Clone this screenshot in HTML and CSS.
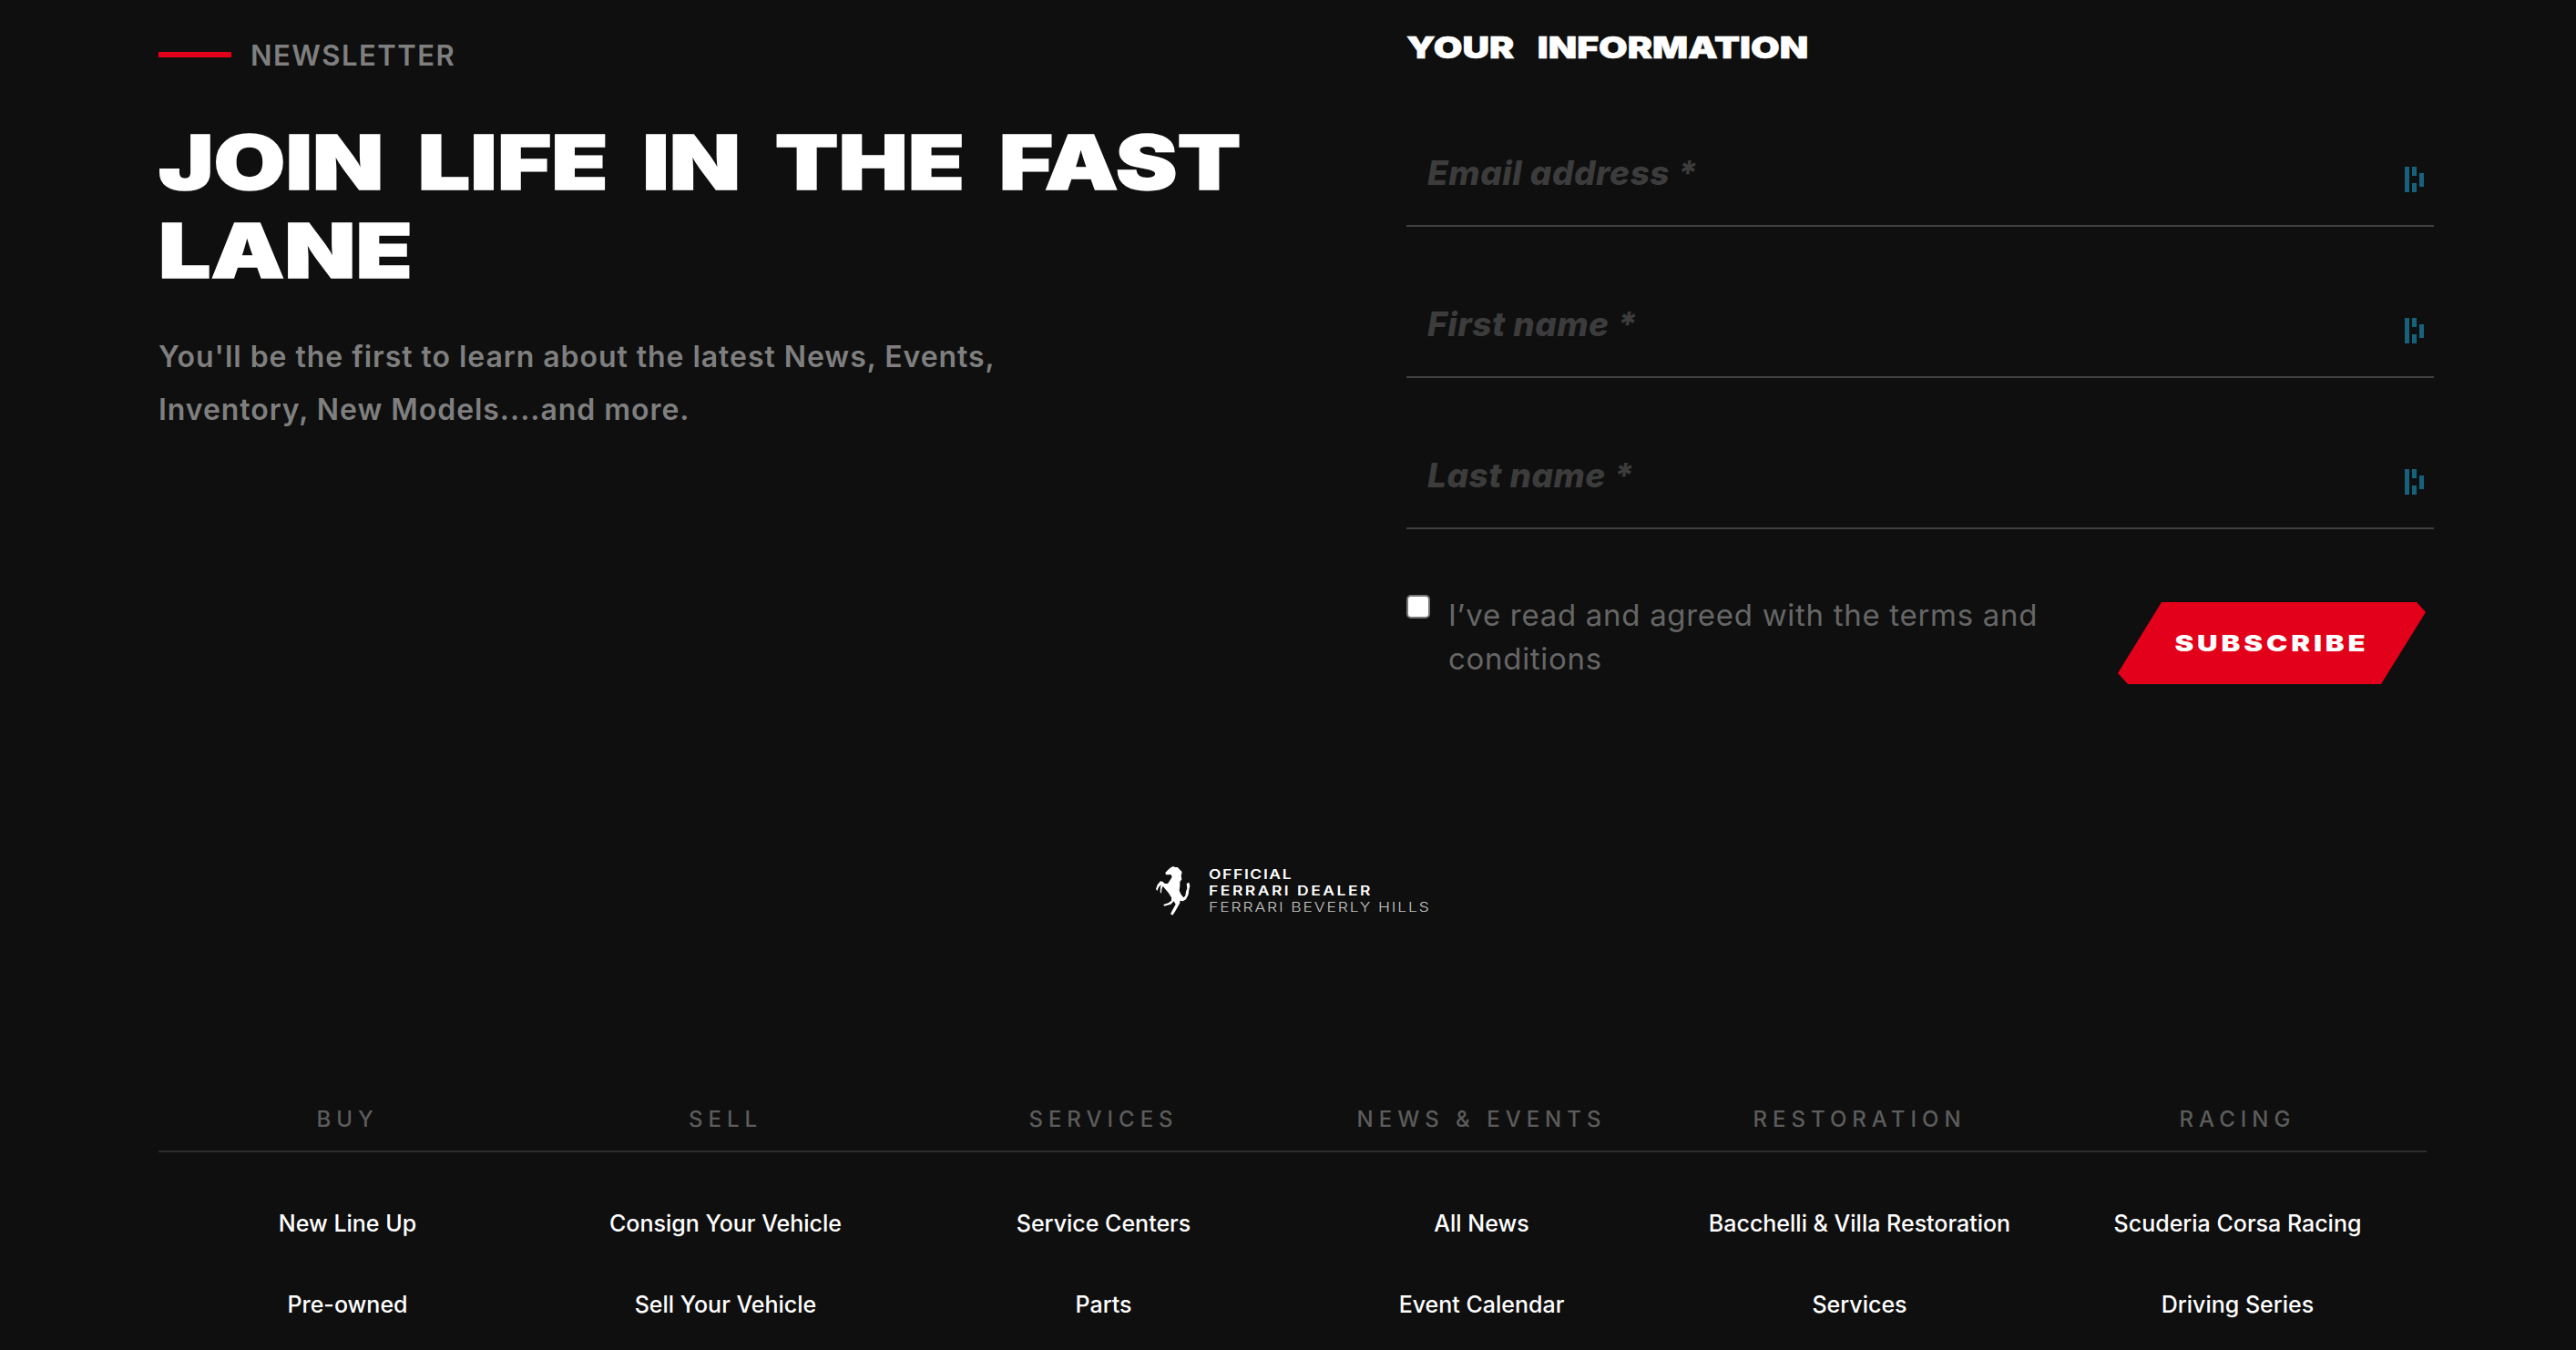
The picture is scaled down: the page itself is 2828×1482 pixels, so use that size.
FILE: index.html
```html
<!DOCTYPE html>
<html lang="en">
<head>
    <meta charset="UTF-8">
    <title>Newsletter - Ferrari Beverly Hills</title>
    <link rel="stylesheet" href="styles.css">
</head>
<body>
    <section class="newsletter">
        <div class="intro">
            <div class="eyebrow"><span class="eyebrow-line"></span>NEWSLETTER</div>
            <h1 class="title"><span class="title-line">JOIN LIFE IN THE FAST</span><span class="title-line">LANE</span></h1>
            <p class="lead">You'll be the first to learn about the latest News, Events, Inventory, New Models....and more.</p>
        </div>
        <form class="signup">
            <h2 class="signup-title"><span class="signup-title-text">YOUR INFORMATION</span></h2>
            <label class="field">
                <input type="text" placeholder="Email address *">
                <svg class="field-icon" viewBox="0 0 21 28"><path d="M0 0h5v28H0zM8 0h5v10H8zM8 18h5v10H8zM16 7h5v15h-5z"/></svg>
            </label>
            <label class="field">
                <input type="text" placeholder="First name *">
                <svg class="field-icon" viewBox="0 0 21 28"><path d="M0 0h5v28H0zM8 0h5v10H8zM8 18h5v10H8zM16 7h5v15h-5z"/></svg>
            </label>
            <label class="field">
                <input type="text" placeholder="Last name *">
                <svg class="field-icon" viewBox="0 0 21 28"><path d="M0 0h5v28H0zM8 0h5v10H8zM8 18h5v10H8zM16 7h5v15h-5z"/></svg>
            </label>
            <div class="signup-bottom">
                <label class="terms">
                    <input type="checkbox" class="terms-box">
                    <span class="terms-text">I’ve read and agreed with the terms and conditions</span>
                </label>
                <button type="button" class="subscribe"><span class="subscribe-text">SUBSCRIBE</span></button>
            </div>
        </form>
    </section>

    <div class="dealer">
        <svg class="dealer-horse" viewBox="0 0 156 192"><path fill="#fff" d="M52 36L60 28 68 20 78 15 84 18 92 18 100 26 107 34 104 46 106 58 100 66 100 80 98 95 104 108 112 118 118 112 120 98 124 88 122 72 130 68 133 80 130 92 128 108 120 124 110 130 100 128 100 136 92 150 84 164 76 176 69 172 76 158 86 140 80 130 70 140 48 146 46 141 62 136 72 128 72 118 62 102 50 88 44 80 40 90 39 104 35 100 36 84 38 76 30 84 25 96 21 90 26 76 36 64 44 66 50 72 60 72 68 60 74 50 70 42 62 43 54 43z"/></svg>
        <div class="dealer-text">
            <span class="dealer-strong">OFFICIAL</span>
            <span class="dealer-strong dealer-wide">FERRARI DEALER</span>
            <span class="dealer-name">FERRARI BEVERLY HILLS</span>
        </div>
    </div>

    <nav class="links">
        <div class="links-head">
            <span>BUY</span><span>SELL</span><span>SERVICES</span><span>NEWS &amp; EVENTS</span><span>RESTORATION</span><span>RACING</span>
        </div>
        <div class="links-row">
            <a href="#">New Line Up</a><a href="#">Consign Your Vehicle</a><a href="#">Service Centers</a><a href="#">All News</a><a href="#">Bacchelli &amp; Villa Restoration</a><a href="#">Scuderia Corsa Racing</a>
        </div>
        <div class="links-row">
            <a href="#">Pre-owned</a><a href="#">Sell Your Vehicle</a><a href="#">Parts</a><a href="#">Event Calendar</a><a href="#">Services</a><a href="#">Driving Series</a>
        </div>
    </nav>
</body>
</html>
```
FILE: styles.css
```css
body {
    margin: 0;
    background: #0f0f0f;
    color: #fff;
    font-family: Inter, "Noto Sans", sans-serif;
    overflow: hidden;
}

.newsletter {
    display: flex;
    padding: 0 156px 0 174px;
    height: 900px;
}

.intro {
    width: 1370px;
}

.eyebrow {
    display: flex;
    align-items: center;
    gap: 21px;
    padding-top: 42px;
    height: 36px;
    font-size: 31px;
    font-weight: 600;
    letter-spacing: 1.5px;
    color: #7f7f7f;
}

.eyebrow-line {
    width: 80px;
    height: 6px;
    background: #e2001a;
}

.title {
    margin: 52px 0 0;
    font-size: 82px;
    font-weight: 900;
    line-height: 97px;
    word-spacing: 14px;
    -webkit-text-stroke: 1.5px #fff;
}

.title-line {
    display: block;
    white-space: nowrap;
    transform: scaleX(1.24);
    transform-origin: left;
}

.lead {
    margin: 39px 0 0;
    width: 960px;
    font-size: 32px;
    font-weight: 600;
    line-height: 58px;
    letter-spacing: 0.95px;
    color: #7f7f7f;
}

.signup {
    width: 1128px;
}

.signup-title {
    margin: 0;
    padding-top: 32px;
    font-size: 33px;
    font-weight: 900;
    line-height: 40px;
    word-spacing: 14px;
    -webkit-text-stroke: 0.6px #fff;
}

.signup-title-text {
    display: block;
    white-space: nowrap;
    transform: scaleX(1.24);
    transform-origin: left;
}

.field {
    display: flex;
    align-items: flex-end;
    box-sizing: content-box;
    height: 129px;
    padding-bottom: 35px;
    border-bottom: 2px solid #404040;
}

.signup-title + .field {
    height: 140px;
}

.field input {
    flex: 1;
    padding: 0 0 0 23px;
    border: 0;
    background: none;
    font-family: Inter, sans-serif;
    font-size: 37px;
    font-weight: 800;
    font-style: italic;
    letter-spacing: 0.5px;
}

.field input::placeholder {
    color: #3c3c3c;
    opacity: 1;
}

.field-icon {
    width: 21px;
    height: 28px;
    margin: 0 11px 1px 0;
    fill: #16627c;
}

.signup-bottom {
    display: flex;
    justify-content: space-between;
    align-items: flex-start;
    padding-top: 72px;
}

.terms {
    display: flex;
    align-items: flex-start;
    gap: 20px;
    width: 700px;
    font-size: 33px;
    line-height: 48px;
    letter-spacing: 0.7px;
    color: #666;
}

.terms-text {
    margin-top: -2px;
}

.terms-box {
    appearance: none;
    flex: none;
    width: 26px;
    height: 26px;
    margin: 0;
    border: 2px solid #777;
    border-radius: 5px;
    background: #fff;
}

.subscribe {
    width: 339px;
    height: 90px;
    margin: 8px 8px 0 0;
    border: 0;
    background: #e2001a;
    clip-path: polygon(48px 0, 328px 0, 338px 11px, 289px 90px, 11px 90px, 0 78px);
    color: #fff;
    font-family: Inter, sans-serif;
    font-size: 24px;
    font-weight: 900;
    letter-spacing: 3px;
}

.subscribe-text {
    display: inline-block;
    transform: scaleX(1.3);
}

.dealer {
    display: flex;
    justify-content: center;
    align-items: center;
    gap: 13px;
    margin-top: 46px;
    padding-left: 4px;
}

.dealer-horse {
    width: 52px;
    height: 64px;
}

.dealer-text {
    display: flex;
    flex-direction: column;
    width: 243px;
    font-size: 14px;
    line-height: 18px;
    letter-spacing: 1.3px;
    white-space: nowrap;
}

.dealer-text span {
    transform: scaleX(1.25);
    transform-origin: left;
}

.dealer-strong {
    font-weight: 600;
}

.dealer-wide {
    letter-spacing: 2px;
}

.dealer-name {
    font-weight: 300;
    letter-spacing: 1.5px;
    color: #c4c4c4;
}

.links {
    margin: 204px 164px 0 174px;
}

.links-head {
    display: grid;
    grid-template-columns: repeat(6, 1fr);
    padding-bottom: 19px;
    border-bottom: 2px solid #2e2e2e;
    font-size: 24px;
    font-weight: 500;
    line-height: 30px;
    letter-spacing: 6px;
    text-align: center;
    color: #5c5c5c;
}

.links-row {
    display: grid;
    grid-template-columns: repeat(6, 1fr);
    height: 89px;
    align-items: center;
    text-align: center;
    font-size: 25px;
    font-weight: 500;
}

.links-head + .links-row {
    margin-top: 33px;
}

.links-row a {
    color: #fff;
    text-decoration: none;
}
```
